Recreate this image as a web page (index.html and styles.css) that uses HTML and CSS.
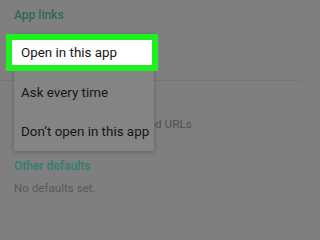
FILE: index.html
```html
<!DOCTYPE html>
<html>
<head>
<meta charset="utf-8">
<link rel="stylesheet" href="styles.css">
</head>
<body>
<div class="screen">
  <div class="section-title first">App links</div>
  <div class="row-top"></div>
  <div class="divider"></div>
  <div class="row-setting">
    <div class="setting-summary">Open gmail.com and related URLs</div>
  </div>
  <div class="section-title other">Other defaults</div>
  <div class="muted">No defaults set.</div>

  <div class="menu">
    <div class="menu-item selected"><span class="label">Open in this app</span></div>
    <div class="menu-item"><span class="label">Ask every time</span></div>
    <div class="menu-item"><span class="label">Don’t open in this app</span></div>
  </div>
</div>
</body>
</html>
```
FILE: styles.css
```css
html, body {
  margin: 0;
  padding: 0;
}
body {
  background: #7f7f7f;
  font-family: Roboto, "Liberation Sans", sans-serif;
  width: 300px;
  height: 200px;
  overflow: hidden;
}
.screen {
  position: relative;
  width: 300px;
  height: 200px;
}
.section-title {
  color: #2b6a60;
  font-size: 12px;
  font-weight: 500;
  padding-left: 14px;
  line-height: 16px;
}
.section-title.first {
  padding-top: 7px;
}
.row-top {
  height: 57px;
}
.divider {
  height: 1px;
  background: #767676;
}
.row-setting {
  padding: 35px 0 14px 14px;
}
.setting-summary {
  color: #505050;
  font-size: 11.8px;
  line-height: 16px;
  white-space: nowrap;
}
.section-title.other {
  color: #2f7e70;
  padding-top: 12px;
}
.muted {
  color: #585858;
  font-size: 11.6px;
  padding-left: 14px;
  padding-top: 6px;
  line-height: 16px;
}
.menu {
  position: absolute;
  left: 14px;
  top: 34px;
  width: 140px;
  background: #848484;
  box-shadow: 0 1px 4px rgba(0,0,0,0.25);
  display: flex;
  flex-direction: column;
}
.menu-item {
  position: relative;
  height: 39px;
  display: flex;
  align-items: center;
  padding-left: 7px;
  color: #161616;
  font-size: 13.4px;
}
.menu-item .label {
  position: relative;
  z-index: 1;
}
.menu-item.selected {
  height: 37px;
  margin-bottom: 2px;
}
.menu-item.selected::before {
  content: "";
  position: absolute;
  left: -8px;
  top: 0;
  width: 140px;
  height: 25px;
  background: #ffffff;
  border: 6px solid #1ff01f;
}
```
